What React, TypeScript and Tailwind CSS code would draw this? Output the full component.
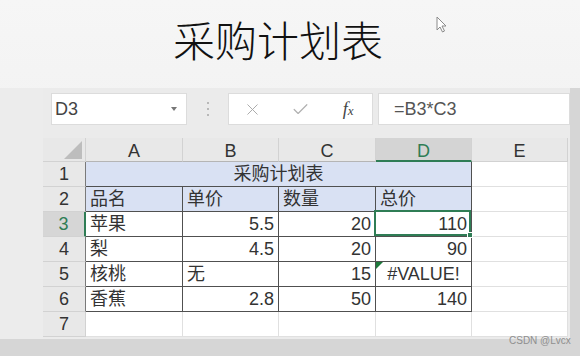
import React from 'react';
import { X, Check } from 'lucide-react';

const COLS = ['A', 'B', 'C', 'D', 'E'];

type Cell = { text?: string; align?: 'left' | 'right' | 'center' };

const ROWS: Cell[][] = [
  [{ text: '品名' }, { text: '单价' }, { text: '数量' }, { text: '总价' }],
  [{ text: '苹果' }, { text: '5.5', align: 'right' }, { text: '20', align: 'right' }, { text: '110', align: 'right' }],
  [{ text: '梨' }, { text: '4.5', align: 'right' }, { text: '20', align: 'right' }, { text: '90', align: 'right' }],
  [{ text: '核桃' }, { text: '无' }, { text: '15', align: 'right' }, { text: '#VALUE!', align: 'center' }],
  [{ text: '香蕉' }, { text: '2.8', align: 'right' }, { text: '50', align: 'right' }, { text: '140', align: 'right' }],
];

const alignClass = (a?: string) =>
  a === 'right' ? 'justify-end pr-[4px]' : a === 'center' ? 'justify-center' : 'justify-start pl-[4px]';

const RowHead = ({ n, active, data }: { n: number; active?: boolean; data?: boolean }) => (
  <div
    className={
      'flex items-center justify-center border-b border-[#d2d2d2] ' +
      (active
        ? 'bg-[#d6d6d6] text-[#2f7d55] border-r-2 border-r-[#2f7d55]'
        : data
        ? 'bg-[#e8e8e8] text-[#333] border-r border-r-[#7a7a7a]'
        : 'bg-[#e8e8e8] text-[#333] border-r border-r-[#d2d2d2]')
    }
  >
    {n}
  </div>
);

const App = () => {
  return (
    <div className="relative w-[580px] h-[356px] overflow-hidden flex flex-col bg-gradient-to-b from-[#f6f6f6] to-[#ececec] font-['Liberation_Sans','Noto_Sans_CJK_SC',sans-serif]">
      {/* title */}
      <div className="h-[88px] shrink-0 flex items-center justify-center pr-[24px] pb-[10px]">
        <span className="text-[42px] leading-none font-light text-[#111] font-['Noto_Sans_CJK_SC',sans-serif]">采购计划表</span>
      </div>

      {/* mouse pointer */}
      <svg className="absolute left-[436px] top-[16px]" width="11" height="17" viewBox="0 0 11 17">
        <path d="M1 1 L1 14 L4 11 L6.5 16 L8.5 15 L6 10 L10 10 Z" fill="#fff" stroke="#8a8a8a" strokeWidth="1" strokeLinejoin="round" />
      </svg>

      <div className="flex h-[251px] shrink-0">
        <div className="w-[43px] bg-[#ececec]" />
        <div className="w-[527px] bg-[#ebebeb] flex flex-col">
          {/* toolbar */}
          <div className="h-[50px] flex items-start pt-[5px] pl-[8px]">
            <div className="w-[136px] h-[32px] bg-white border border-[#dcdcdc] flex items-center justify-between pl-[3px] pr-[9px]">
              <span className="text-[18px] text-[#444]">D3</span>
              <svg width="6" height="4" viewBox="0 0 6 4"><path d="M0 0 L6 0 L3 4 Z" fill="#777" /></svg>
            </div>
            <div className="w-[41px] h-[32px] flex flex-col items-center justify-center gap-[4px]">
              <span className="w-[2px] h-[2px] bg-[#b8b8b8]" />
              <span className="w-[2px] h-[2px] bg-[#b8b8b8]" />
              <span className="w-[2px] h-[2px] bg-[#b8b8b8]" />
            </div>
            <div className="w-[145px] h-[32px] bg-white border border-[#dcdcdc] flex items-center">
              <div className="w-[48px] flex justify-center"><X size={19} strokeWidth={1.2} color="#a8a8a8" /></div>
              <div className="w-[48px] flex justify-center"><Check size={19} strokeWidth={1.5} color="#b0b0b0" /></div>
              <div className="w-[48px] flex justify-center items-baseline font-['Liberation_Serif',serif] italic text-[#444]">
                <span className="text-[18px]">f</span>
                <span className="text-[13px]">x</span>
              </div>
            </div>
            <div className="ml-[5px] w-[192px] h-[32px] bg-white border border-[#dcdcdc] flex items-center pl-[15px]">
              <span className="text-[18px] text-[#555]">=B3*C3</span>
            </div>
          </div>

          {/* sheet grid */}
          <div className="grid grid-cols-[43px_97px_96px_97px_96px_96px] grid-rows-[24px_repeat(7,25px)] text-[18px] leading-none">
            {/* corner */}
            <div className="relative bg-[#e8e8e8] border-r border-b border-[#d2d2d2]">
              <svg className="absolute right-[3px] bottom-[2px]" width="18" height="18" viewBox="0 0 18 18">
                <path d="M18 0 L18 18 L0 18 Z" fill="#bdbdbd" />
              </svg>
            </div>
            {COLS.map((c) => (
              <div
                key={c}
                className={
                  'flex items-center justify-center pt-[3px] border-r border-r-[#d2d2d2] ' +
                  (c === 'D'
                    ? 'bg-[#d4d4d4] text-[#2f7d55] border-b-2 border-b-[#2f7d55]'
                    : c === 'E'
                    ? 'bg-[#e8e8e8] text-[#333] border-b border-b-[#d2d2d2]'
                    : 'bg-[#e8e8e8] text-[#333] border-b border-b-[#b5b5b5]')
                }
              >
                {c}
              </div>
            ))}

            {/* row 1: merged title */}
            <RowHead n={1} data />
            <div className="col-span-4 bg-[#d9e1f3] border-r border-b border-[#505050] flex items-center justify-center text-[#333]">
              采购计划表
            </div>
            <div className="bg-white border-r border-b border-[#e0e0e0]" />

            {/* rows 2-6 */}
            {ROWS.map((row, ri) => {
              const n = ri + 2;
              return (
                <React.Fragment key={n}>
                  <RowHead n={n} active={n === 3} data />
                  {row.map((cell, ci) => (
                    <div
                      key={ci}
                      className={
                        'relative flex items-center text-[#333] border-r border-b border-[#505050] ' +
                        (n === 2 ? 'bg-[#d9e1f3] ' : 'bg-white ') +
                        alignClass(cell.align)
                      }
                    >
                      {cell.text}
                      {n === 3 && ci === 3 && (
                        <div className="absolute -left-[2px] -top-[2px] right-0 bottom-0 border-2 border-[#2f7d55] z-10">
                          <div className="absolute -right-[4px] -bottom-[4px] w-[6px] h-[6px] bg-[#2f7d55] border border-white" />
                        </div>
                      )}
                      {n === 5 && ci === 3 && (
                        <svg className="absolute left-0 top-0" width="7" height="7" viewBox="0 0 7 7">
                          <path d="M0 0 L7 0 L0 7 Z" fill="#1e7a3c" />
                        </svg>
                      )}
                    </div>
                  ))}
                  <div className="bg-white border-r border-b border-[#e0e0e0]" />
                </React.Fragment>
              );
            })}

            {/* row 7 */}
            <RowHead n={7} />
            {COLS.map((c) => (
              <div key={c} className="bg-white border-r border-b border-[#e0e0e0]" />
            ))}
          </div>
        </div>
        <div className="flex-1 bg-[#d6d6d6]" />
      </div>
      <div className="flex-1 bg-[#d6d6d6]" />

      {/* watermark */}
      <span className="absolute left-[509px] top-[336px] text-[10px] leading-none text-[#8f8f8f]">CSDN @Lvcx</span>
    </div>
  );
};

export default App;
